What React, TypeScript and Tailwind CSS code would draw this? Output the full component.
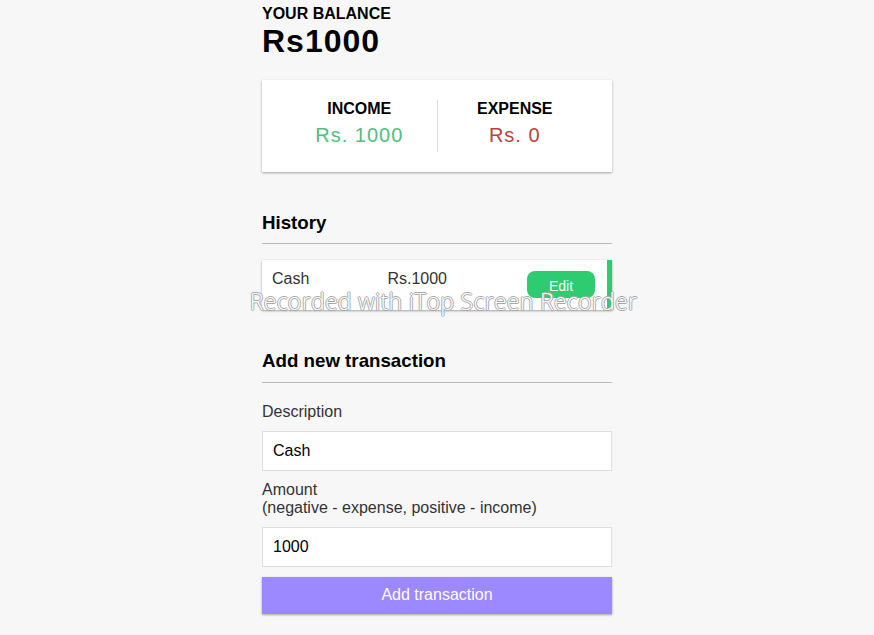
const card = 'bg-white shadow-[0_1px_3px_rgba(0,0,0,0.12),0_1px_2px_rgba(0,0,0,0.24)]'

export default function App() {
  return (
    <div className="relative min-h-[635px] bg-[#f7f7f7] font-['Liberation_Sans',Arial,sans-serif] text-[#333]">
      <div className="mx-auto w-[350px] pt-[5px]">
        <h4 className="text-[16px] font-bold uppercase leading-[18.4px] text-black">Your Balance</h4>
        <h1 className="text-[32px] font-bold leading-[36.8px] tracking-[1px] text-black">Rs1000</h1>

        <div className={`${card} my-[20px] flex justify-between p-[20px]`}>
          <div className="flex-1 border-r border-[#dedede] text-center">
            <h4 className="text-[16px] font-bold uppercase leading-[18.4px] text-black">Income</h4>
            <p className="my-[5px] text-[20px] leading-[23px] tracking-[1px] text-[#52be80]">Rs. 1000</p>
          </div>
          <div className="flex-1 text-center">
            <h4 className="text-[16px] font-bold uppercase leading-[18.4px] text-black">Expense</h4>
            <p className="my-[5px] text-[20px] leading-[23px] tracking-[1px] text-[#b9443b]">Rs. 0</p>
          </div>
        </div>

        <h3 className="mt-[40px] border-b border-[#bbb] pb-[10px] text-[18.72px] font-bold leading-[21.5px] text-black">
          History
        </h3>
        <ul className="mt-[16px] mb-[40px]">
          <li className={`${card} flex h-[50px] items-start justify-between border-r-[5px] border-[#2ecc71] py-[10px] pl-[10px] pr-[12px] text-[16px] leading-[18.4px]`}>
            <span>Cash</span>
            <span className="mr-[2px]">Rs.1000</span>
            <button className="mt-[1px] h-[27px] w-[68px] rounded-[8px] bg-[#2ecc71] pt-[3px] text-[14px] text-white">
              Edit
            </button>
          </li>
        </ul>

        <h3 className="mt-[40px] border-b border-[#bbb] pb-[10px] text-[18.72px] font-bold leading-[21.5px] text-black">
          Add new transaction
        </h3>
        <form className="mt-[10px]" onSubmit={(e) => e.preventDefault()}>
          <div>
            <label className="my-[10px] inline-block text-[16px] leading-[18.4px]">Description</label>
            <input
              className="block h-[40px] w-full border border-[#dedede] bg-white px-[10px] text-[16px] text-black outline-none"
              defaultValue="Cash"
            />
          </div>
          <div>
            <label className="mt-[10px] mb-[9px] inline-block text-[16px] leading-[18.4px]">
              Amount
              <br />
              (negative - expense, positive - income)
            </label>
            <input
              className="block h-[40px] w-full border border-[#dedede] bg-white px-[10px] text-[16px] text-black outline-none"
              defaultValue="1000"
            />
          </div>
          <button
            className={`mt-[10px] mb-[30px] block h-[37px] w-full bg-[#9c88ff] text-[16px] text-white shadow-[0_1px_3px_rgba(0,0,0,0.12),0_1px_2px_rgba(0,0,0,0.24)]`}
          >
            Add transaction
          </button>
        </form>
      </div>

      {/* recorder watermark */}
      <div className="pointer-events-none absolute left-0 right-0 top-[286px] pl-[13px] text-center font-['Open_Sans',sans-serif] text-[23px] font-light leading-[30px] tracking-[0.3px] text-white [text-shadow:1px_0_0_#a8a8a8,-1px_0_0_#a8a8a8,0_1px_0_#a8a8a8,0_-1px_0_#a8a8a8]">
        Recorded with iTop Screen Recorder
      </div>
    </div>
  )
}
